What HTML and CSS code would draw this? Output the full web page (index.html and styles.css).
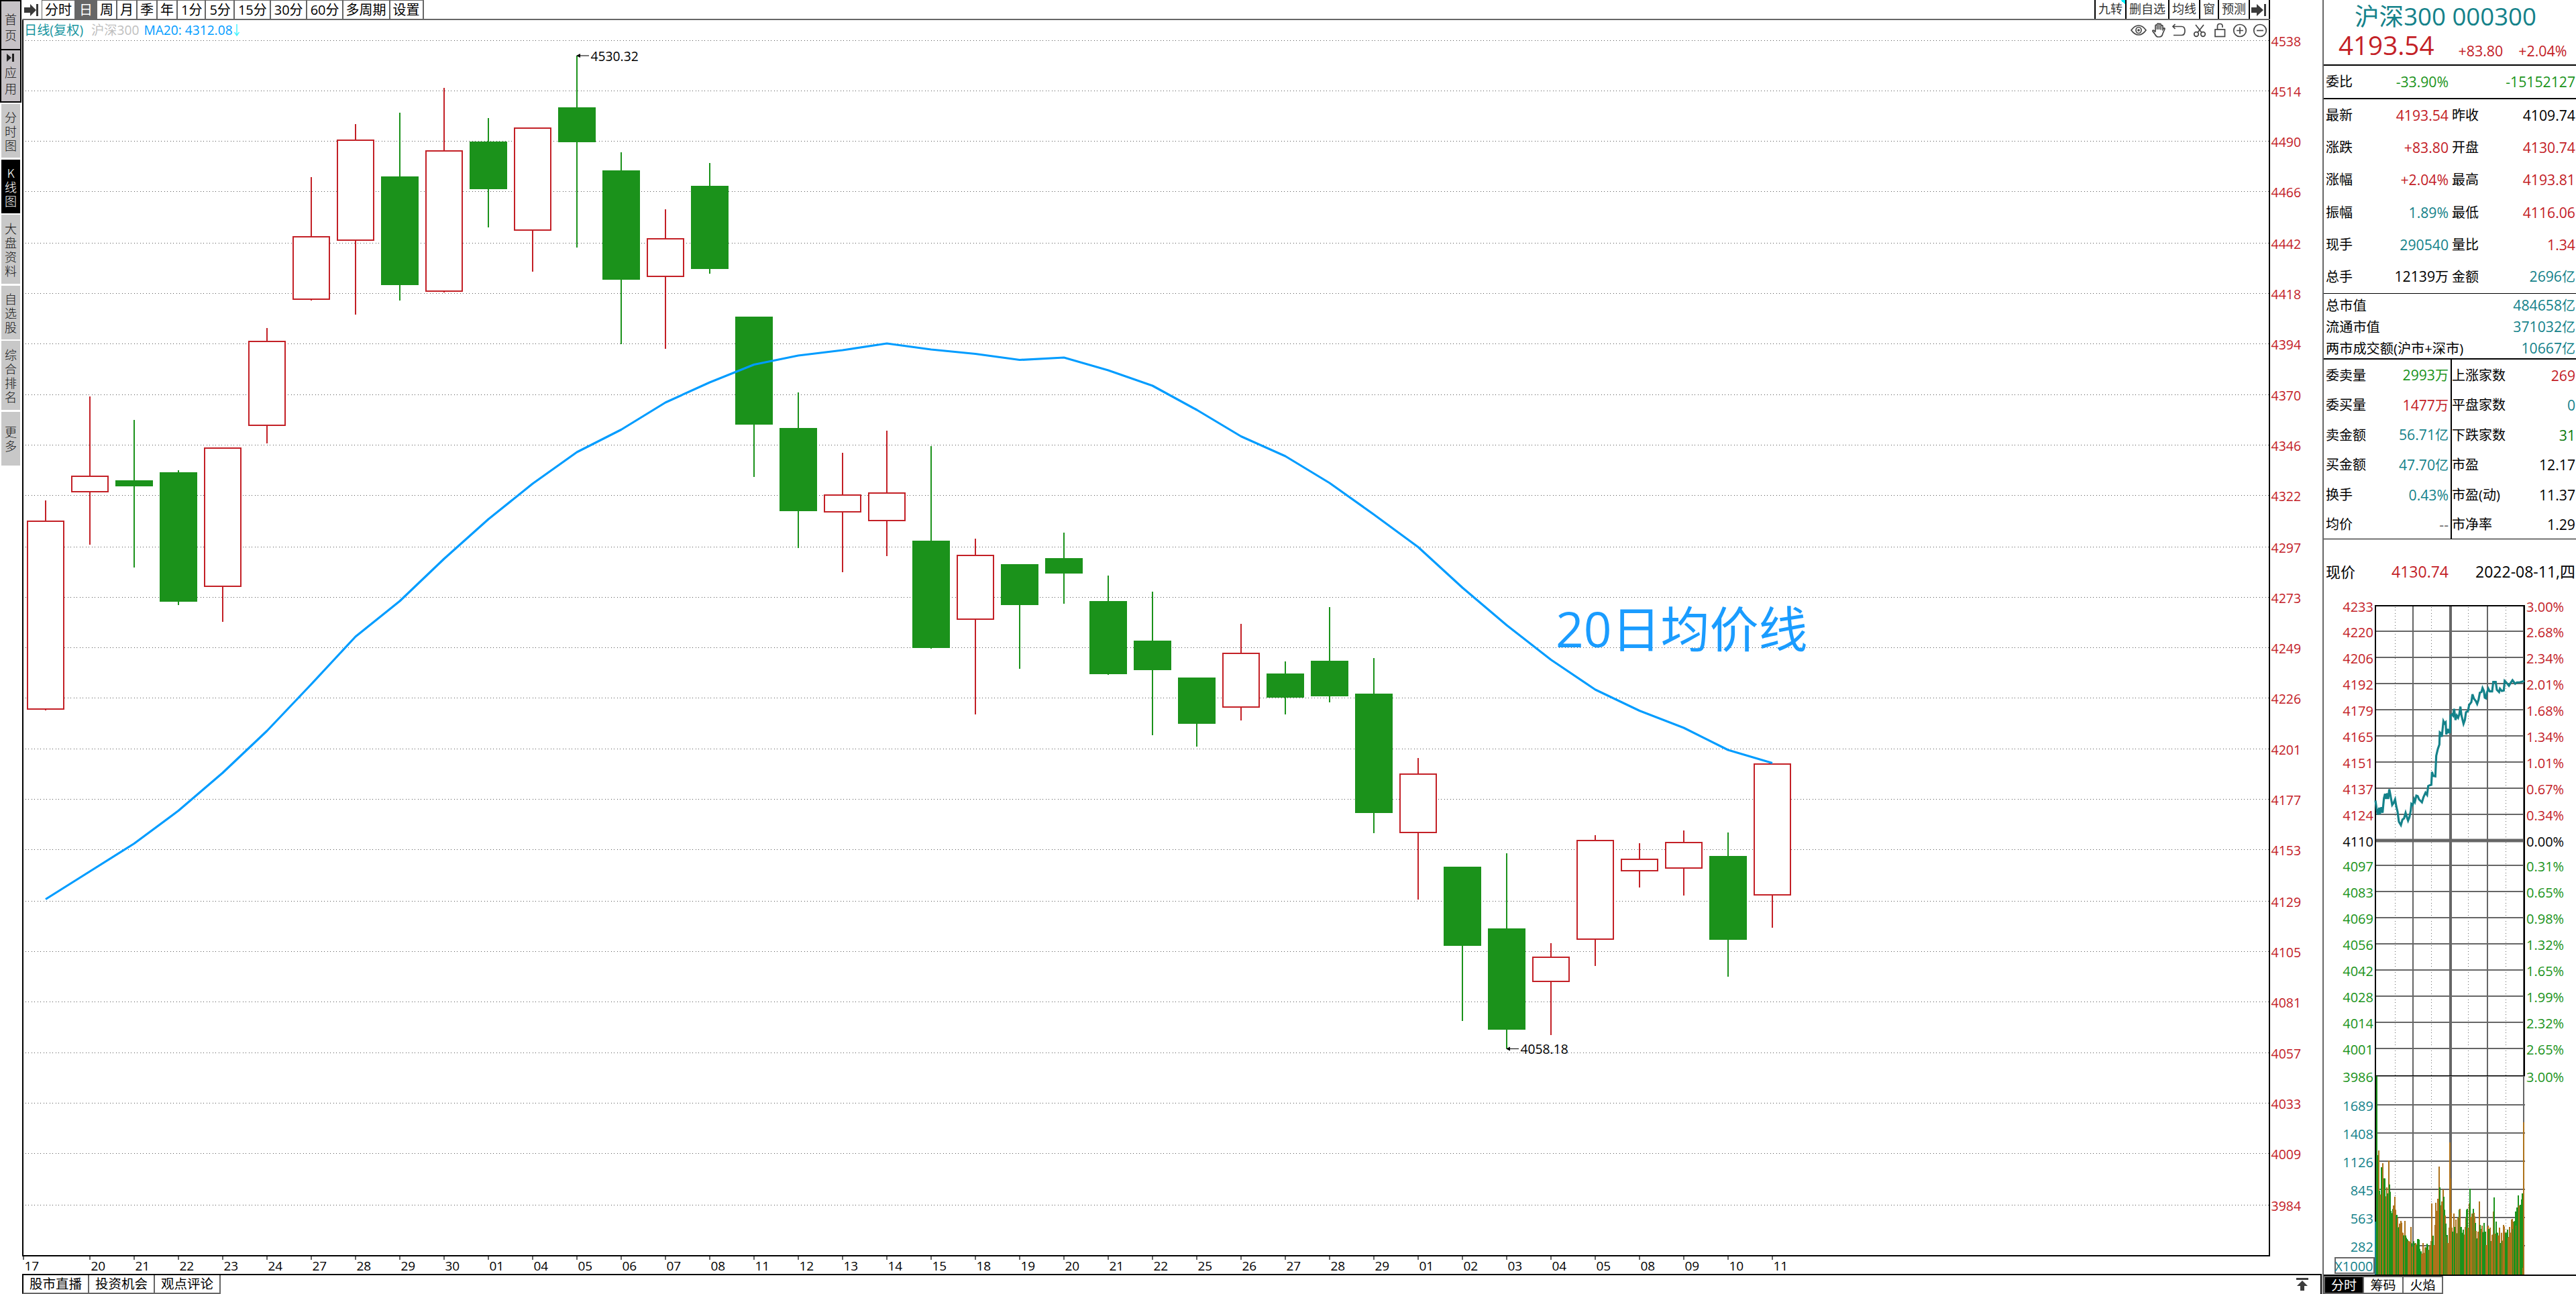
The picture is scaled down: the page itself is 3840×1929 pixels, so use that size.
FILE: index.html
```html
<!DOCTYPE html>
<html lang="zh-CN">
<head>
	<meta charset="utf-8">
	<title>沪深300 000300</title>
	<link rel="stylesheet" href="styles.css">
</head>
<body>
	<div id="layout">
		<div class="side">
			<a class="btn home">首页</a>
			<a class="btn app">
				<svg width="12" height="14" viewBox="0 0 12 14"><path d="M0 1L7 7L0 13Z"/><rect x="8" y="1" width="3" height="12"/></svg>
				应用
			</a>
			<a class="item">分时图</a>
			<a class="item on">K线图</a>
			<a class="item long">大盘资料</a>
			<a class="item own">自选股</a>
			<a class="item long">综合排名</a>
			<a class="item">更多</a>
		</div>

		<div class="main">
			<div class="toolbar">
				<svg class="arrow" width="28" height="28" viewBox="0 0 28 28"><path d="M3 11H12V6L21 15L12 24V19H3Z"/><rect x="21" y="6" width="3" height="18"/></svg>
				<div class="period">
					<a>分时</a><a class="on">日</a><a>周</a><a>月</a><a>季</a><a>年</a><a class="min">1分</a><a class="min">5分</a><a class="min">15分</a><a class="min">30分</a><a class="min">60分</a><a>多周期</a><a>设置</a>
				</div>
				<div class="extra">
					<a class="mark">九转</a><a>删自选</a><a>均线</a><a>窗</a><a>预测</a>
					<a class="go"><svg width="26" height="28" viewBox="0 0 26 28"><path d="M1 11H9V6L19 15L9 24V19H1Z"/><rect x="20" y="6" width="3" height="18"/></svg></a>
				</div>
			</div>

			<div class="plot">
				<svg id="kline" width="3428" height="1868" viewBox="33 30 3428 1868"></svg>
				<div class="legend">
					<span class="l1">日线(复权)</span>
					<span class="l2">沪深300</span>
					<span class="l3">MA20: 4312.08</span>
					<svg width="8" height="18" viewBox="0 0 8 18"><path d="M4 0V17M0.5 12L4 17L7.5 12"/></svg>
				</div>
				<div class="tools">
					<svg viewBox="0 0 24 24"><path d="M1 12Q6 5 12 5T23 12Q18 19 12 19T1 12Z"/><ellipse cx="12" cy="12" rx="4" ry="4.5"/><circle cx="12" cy="12" r="1"/></svg>
					<svg viewBox="0 0 24 24"><path d="M7 14V5.5Q7 4 8.3 4T9.6 5.5V11V3.5Q9.6 2 11 2T12.4 3.5V11V3.5Q12.4 2.3 13.8 2.3T15.2 3.8V11.5V6Q15.2 4.6 16.6 4.6T18 6V11L19.5 9Q21 8.5 21 10L18 17Q17 22 13 22H11Q8.500 22 7 19L3 13.500Q2.500 12 4 12Q5 12 7 15"/></svg>
					<svg viewBox="0 0 24 24"><path d="M3 6.500H16Q21 6.500 21 13T16 19.500H4M6.500 3L3 6.500L6.500 10"/></svg>
					<svg viewBox="0 0 24 24"><path d="M6 4L15 15.500M18 4L9 15.500"/><circle cx="7" cy="18" r="3.300"/><circle cx="17" cy="18" r="3.300"/></svg>
					<svg viewBox="0 0 24 24"><rect x="5" y="11" width="14.500" height="10.500"/><path d="M8.500 11V6Q8.500 2.500 12.300 2.500T16 6V8"/></svg>
					<svg viewBox="0 0 24 24"><ellipse cx="12" cy="12.500" rx="9.300" ry="9"/><path d="M7 12.500H17M12 7.500V17.500"/></svg>
					<svg viewBox="0 0 24 24"><ellipse cx="12" cy="12.500" rx="9.300" ry="9"/><path d="M7 12.500H17"/></svg>
				</div>
			</div>

			<div class="foot">
				<div class="tabs"><a>股市直播</a><a>投资机会</a><a>观点评论</a></div>
				<svg class="up" width="18" height="19" viewBox="0 0 18 19"><path d="M0 0H18V3H0ZM9 4L17 12H12V19H6V12H1Z"/></svg>
			</div>
		</div>

		<div class="quote">
			<div class="head">
				<div class="name">沪深300 000300</div>
				<div class="price red"><b>4193.54</b><span>+83.80</span><span>+2.04%</span></div>
			</div>
			<div class="sec wb">
				<div class="row"><p>委比<i class="green">-33.90%</i></p><p><i class="green">-15152127</i></p></div>
			</div>
			<div class="sec base">
				<div class="row"><p>最新<i class="red">4193.54</i></p><p>昨收<i>4109.74</i></p></div>
				<div class="row"><p>涨跌<i class="red">+83.80</i></p><p>开盘<i class="red">4130.74</i></p></div>
				<div class="row"><p>涨幅<i class="red">+2.04%</i></p><p>最高<i class="red">4193.81</i></p></div>
				<div class="row"><p>振幅<i class="teal">1.89%</i></p><p>最低<i class="red">4116.06</i></p></div>
				<div class="row"><p>现手<i class="teal">290540</i></p><p>量比<i class="red">1.34</i></p></div>
				<div class="row"><p>总手<i>12139<em>万</em></i></p><p>金额<i class="teal">2696<em>亿</em></i></p></div>
			</div>
			<div class="sec total">
				<p>总市值<i class="teal">484658<em>亿</em></i></p>
				<p>流通市值<i class="teal">371032<em>亿</em></i></p>
				<p>两市成交额(沪市+深市)<i class="teal">10667<em>亿</em></i></p>
			</div>
			<div class="sec split">
				<div class="row"><p>委卖量<i class="green">2993<em>万</em></i></p><p>上涨家数<i class="red">269</i></p></div>
				<div class="row"><p>委买量<i class="red">1477<em>万</em></i></p><p>平盘家数<i class="teal">0</i></p></div>
				<div class="row"><p>卖金额<i class="teal">56.71<em>亿</em></i></p><p>下跌家数<i class="dgreen">31</i></p></div>
				<div class="row"><p>买金额<i class="teal">47.70<em>亿</em></i></p><p>市盈<i>12.17</i></p></div>
				<div class="row"><p>换手<i class="teal">0.43%</i></p><p>市盈(动)<i>11.37</i></p></div>
				<div class="row"><p>均价<i class="gray">--</i></p><p>市净率<i>1.29</i></p></div>
			</div>
			<div class="now row"><p>现价<i class="red">4130.74</i></p><p><i>2022-08-11,四</i></p></div>
			<svg id="mini" width="376" height="1020" viewBox="3464 880 376 1020"></svg>
			<div class="qtabs"><a class="on">分时</a><a>筹码</a><a>火焰</a></div>
		</div>
	</div>

	<script src="script.js"></script>
</body>
</html>
```
FILE: styles.css
```css
*{
	margin: 0;
	padding: 0;
	box-sizing: border-box;
}
body{
	background: #fff;
	color: #000;
	font-family: "Open Sans","Noto Sans CJK SC",sans-serif;
	font-size: 20px;
	overflow: hidden;
}
i,em{
	font-style: normal;
}
svg{
	display: block;
	flex: none;
}
#layout{
	display: flex;
	width: 3840px;
	height: 1929px;
}
.red{ color: #c32026; }
.green{ color: #1a931a; }
.dgreen{ color: #0a780a; }
.teal{ color: #14828a; }
.gray{ color: #666; }

/* left menu */
.side{
	width: 33px;
	flex: none;
	font-family: "Noto Sans CJK SC",sans-serif;
	font-weight: 300;
	font-size: 18px;
	line-height: 21px;
	text-align: center;
	word-break: break-all;
}
.side a{
	display: flex;
	flex-direction: column;
	justify-content: center;
	align-items: center;
	padding: 0 5px;
	color: #111;
}
.side .btn{
	width: 32px;
	border: 2px solid #000;
	background: #c6c2c6;
	line-height: 24px;
	padding: 0 4px;
}
.side .home{
	height: 75px;
	padding-top: 5px;
}
.side .app{
	height: 78px;
	border-top: 0;
	margin-bottom: 2px;
	padding-bottom: 4px;
}
.side .app svg{
	fill: #222;
	margin-bottom: 2px;
}
.side .item{
	width: 28px;
	height: 80px;
	margin: 0 0 3px 2px;
	background: #c8c8c8;
}
.side .long{
	height: 103px;
}
.side .on{
	background: #000;
	color: #fff;
	margin-bottom: 2px;
}
.side .own{
	margin-bottom: 2px;
}

/* top bar */
.main{
	width: 3428px;
	flex: none;
	display: flex;
	flex-direction: column;
}
.toolbar{
	width: 3351px;
	height: 30px;
	border-bottom: 2px solid #666;
	display: flex;
}
.toolbar svg{
	fill: #3a3a3a;
}
.period{
	display: flex;
	border-top: 1px solid #666;
	border-left: 1px solid #666;
	margin-left: 1px;
}
.period a{
	padding: 0 4px;
	line-height: 27px;
	border-right: 2px solid #666;
}
.period .on{
	background: #666;
	color: #fff;
	padding: 0 5px;
}
.period .min{
	padding: 0 4px 0 5px;
}
.extra{
	display: flex;
	margin-left: auto;
	font-size: 18px;
	line-height: 27px;
	color: #333;
	border-right: 2px solid #000;
}
.extra a{
	border-left: 2px solid #000;
	padding: 0 4px;
}
.extra .go{
	padding: 0 1px;
}
.mark{
	background: linear-gradient(to top right,transparent 50%,#00f0ff 50%) right top/7px 7px no-repeat;
}

/* k line */
.plot{
	position: relative;
	height: 1868px;
}
.legend{
	position: absolute;
	left: 3px;
	top: 0;
	height: 30px;
	display: flex;
	align-items: center;
	font-size: 19.200px;
	line-height: 30px;
}
.legend .l1{ color: #1795a0; margin-right: 12px; }
.legend .l2{ color: #bfbfbf; margin-right: 7px; }
.legend .l3{ color: #009cff; margin-right: 2px; }
.legend svg{
	fill: none;
	stroke: #40f4ff;
	stroke-width: 1.4;
}
.tools{
	position: absolute;
	top: 3px;
	left: 3143px;
	display: flex;
	gap: 6.200px;
}
.tools svg{
	width: 24px;
	height: 24px;
	fill: none;
	stroke: #444;
	stroke-width: 1.7;
}
.grid{ stroke: #555; stroke-width: 1; stroke-dasharray: 1 3 1 4; }
.up-c{ fill: #fff; stroke: #c32026; stroke-width: 2; }
.down-c{ fill: #1b921b; stroke: none; }
.w-up{ stroke: #c32026; stroke-width: 2; }
.w-down{ stroke: #1b921b; stroke-width: 2; }
.axis{ stroke: #000; stroke-width: 2; }
.tick{ stroke: #666; stroke-width: 2; }
.ma{ fill: none; stroke: #009cff; stroke-width: 3.2; stroke-linejoin: round; }
.t-y{ font-size: 19.500px; fill: #c32026; }
.t-x{ font-size: 19px; fill: #000; }
.t-p{ font-size: 19.300px; fill: #000; }
.t-ma{ font-size: 73px; fill: #1a9cff; }

/* bottom bar */
.foot{
	height: 31px;
	display: flex;
	justify-content: space-between;
	border-top: 2px solid #000;
	border-right: 2px solid #000;
	margin-top: 1px;
}
.tabs{
	display: flex;
	height: 28px;
	border-left: 2px solid #000;
	border-bottom: 2px solid #666;
}
.tabs a{
	width: 98px;
	font-size: 19.500px;
	line-height: 26px;
	text-align: center;
	border-right: 2px solid #666;
}
.foot .up{
	margin: 4px 18px 0 0;
	fill: #3c3c3c;
}

/* quote panel */
.quote{
	width: 378px;
	flex: none;
	margin-left: 1px;
	border-left: 2px solid #666;
}
.head{
	height: 98px;
	border-bottom: 2px solid #000;
}
.name{
	height: 48px;
	line-height: 48px;
	padding-left: 46px;
	font-size: 36.600px;
	color: #14828a;
	white-space: nowrap;
}
.price{
	display: flex;
	height: 48px;
	padding-left: 22px;
	font-size: 21.400px;
	line-height: 56px;
}
.price b{
	width: 183px;
	font-weight: 400;
	font-size: 38.600px;
	line-height: 39px;
}
.price span{
	width: 90px;
	white-space: nowrap;
}
.price span + span{
	padding-left: 2px;
}
.sec{
	display: flex;
	flex-direction: column;
	border-bottom: 2px solid #000;
}
.sec .row{
	flex: 1;
}
.row{
	display: grid;
	grid-template-columns: 183px 184px;
	column-gap: 5px;
	align-items: center;
	padding: 0 1px 0 3px;
}
.quote p{
	display: flex;
	align-items: center;
	white-space: nowrap;
	line-height: 30px;
}
.quote i{
	margin-left: auto;
	font-size: 21.200px;
}
.quote em{
	font-size: 20px;
}
.wb{ height: 50px; }
.base{
	height: 290px;
	border-bottom-width: 1px;
}
.total{ height: 98px; }
.total p{
	height: 32px;
	padding: 2px 1px 0 3px;
	font-size: 20.200px;
	line-height: 28px;
}
.split{
	height: 268px;
	border-bottom-width: 1px;
}
.split .row{
	grid-template-columns: 183px 186px;
	column-gap: 3px;
	align-items: stretch;
}
.split p{
	padding-top: 3px;
}
.split p + p{
	border-left: 2px solid #000;
}
.now{
	height: 76px;
	padding-top: 20px;
	font-size: 22px;
}
.now i{
	font-size: 23px;
}
.m-grid{ stroke: #666; stroke-width: 2; }
.m-dot{ stroke: #666; stroke-width: 1; stroke-dasharray: 1 3 1 4; }
.m-line{ fill: none; stroke: #14828a; stroke-width: 3; }
.m-t{ font-size: 20px; }
.m-box{ fill: #fff; stroke: #666; stroke-width: 2; }
.qtabs{
	display: flex;
	height: 29px;
	border-top: 2px solid #000;
	line-height: 25px;
	font-size: 19px;
	text-align: center;
}
.qtabs a{
	width: 59px;
	height: 27px;
	border: 2px solid #666;
	border-left: 0;
}
.qtabs .on{
	width: 60px;
	background: #000;
	color: #fff;
	border-left: 2px solid #666;
}
```
FILE: script.js
```js
var $ = function(id){
	return document.getElementById(id);
};
function line(x1,y1,x2,y2,cls,extra){
	return '<line x1="'+x1+'" y1="'+y1+'" x2="'+x2+'" y2="'+y2+'" class="'+cls+'" '+(extra||'')+'/>';
}
function rect(x,y,w,h,extra){
	return '<rect x="'+x+'" y="'+y+'" width="'+w+'" height="'+h+'" '+extra+'/>';
}
function text(x,y,s,cls,extra){
	return '<text x="'+x+'" y="'+y+'" class="'+cls+'" '+(extra||'')+'>'+s+'</text>';
}

// 日K: 1阳 0阴, 最高, 实体上, 实体下, 最低
var candles = [
	[1,746,777,1057,1059],[1,591,710,733,812],[0,626,716,725,846],[0,701,704,897,902],[1,668,668,874,927],
	[1,489,509,634,661],[1,264,353,446,448],[1,185,209,358,469],[0,168,263,425,448],[1,131,225,434,436],
	[0,176,211,282,339],[1,191,191,343,405],[0,83,160,212,369],[0,227,254,417,513],[1,312,356,412,520],
	[0,243,277,401,408],[0,472,472,633,711],[0,585,638,762,817],[1,675,738,763,853],[1,642,735,776,829],
	[0,665,806,966,967],[1,803,828,923,1065],[0,841,841,902,997],[0,794,832,855,900],[0,858,896,1005,1006],
	[0,882,955,999,1096],[0,1010,1010,1079,1113],[1,930,974,1054,1074],[0,986,1004,1040,1065],[0,905,985,1038,1047],
	[0,981,1034,1212,1242],[1,1130,1154,1241,1341],[0,1292,1292,1410,1522],[0,1272,1384,1535,1563],[1,1406,1427,1463,1543],
	[1,1245,1253,1400,1440],[1,1257,1281,1298,1323],[1,1238,1256,1294,1335],[0,1241,1276,1401,1456],[1,1139,1139,1334,1383]
];
var ma = [1340.5,1299,1257.5,1208.5,1152,1089.5,1020,949,896,833,774,721,674,640.5,600,570,543.5,530,522,512,
	521,527.5,536.5,533,552,575,611,650.5,680,720,767,815.5,876,932,983.5,1028,1059.5,1085,1118,1137.5];
var days = '17 20 21 22 23 24 27 28 29 30 01 04 05 06 07 08 11 12 13 14 15 18 19 20 21 22 25 26 27 28 29 01 02 03 04 05 08 09 10 11'.split(' ');
var prices = [4538,4514,4490,4466,4442,4418,4394,4370,4346,4322,4297,4273,4249,4226,4201,4177,4153,4129,4105,4081,4057,4033,4009,3984];
var priceY = [60,135,210,285,362,437,512,588,663,738,815,890,965,1040,1116,1191,1266,1343,1418,1493,1569,1644,1719,1796];

function drawKline(){
	var s = '', i;
	for(i=0;i<prices.length;i++){
		s += line(38,priceY[i]+.5,3382,priceY[i]+.5,'grid');
		s += text(3385.5,priceY[i]+8.5,prices[i],'t-y');
	}
	var pts = [];
	for(i=0;i<candles.length;i++){
		var c = candles[i], x = 68+66*i;
		var w = c[0] ? 'w-up' : 'w-down';
		s += line(x,c[1],x,c[2],w)+line(x,c[3],x,c[4],w);
		if(c[0]){
			s += rect(x-27,c[2],54,c[3]-c[2],'class="up-c"');
		}else{
			s += rect(x-28,c[2],56,c[3]-c[2],'class="down-c"');
		}
		var tx = i ? x : 35;
		s += line(tx,1873,tx,1878,'tick')+text(tx+1.5,1893.5,days[i],'t-x');
		pts.push(x+','+ma[i]);
	}
	s += '<polyline points="'+pts.join(' ')+'" class="ma"/>';
	s += line(34,30,34,1873,'axis')+line(3383,30,3383,1873,'axis')+line(33,1872,3384,1872,'axis');
	// 最高最低标注
	s += line(864,83,878,83,'',' stroke="#777" stroke-width="2"')+'<path d="M859 83L865 80V86Z"/>'+text(880.5,91,'4530.32','t-p');
	s += line(2248,1563.5,2264,1563.5,'',' stroke="#000"')+'<path d="M2245 1563.5L2251 1560.5V1566.5Z"/>'+text(2266.5,1571,'4058.18','t-p');
	s += text(2319,965,'20日均价线','t-ma');
	$('kline').innerHTML = s;
}

// 分时价格, 三分之一像素
var trend = '303,940 308,975 313,1003 320,972 323,1000 330,970 335,995 341,930 346,910 350,933 356,908 360,933 365,890 370,915 378,960 385,950 391,935 396,965 402,990 408,1035 417,1050 424,1025 431,1020 438,995 443,1012 449,1030 455,1015 461,985 464,955 470,960 476,935 480,945 486,918 492,920 498,935 505,942 511,948 518,925 527,905 534,915 539,875 545,872 553,870 556,812 562,830 571,832 575,740 582,710 589,690 591,635 597,640 600,655 607,585 612,595 617,590 620,645 626,620 630,635 636,635 639,560 646,555 650,560 655,530 661,580 667,560 673,570 678,555 683,520 688,560 697,597 703,580 708,545 717,540 722,513 732,500 737,465 744,485 752,495 758,508 764,490 770,458 777,455 782,437 788,450 792,480 797,483 801,460 808,440 814,452 825,452 830,410 841,410 846,445 856,455 860,440 868,450 877,448 881,405 888,412 900,427 907,415 916,402 928,418 936,412 950,411 969,406';
// 分时成交量, o涨 g跌
var vols = 'g42 g396 g575 o375 g555 o572 o590 g450 g450 o432 o500 g500 g500 g583 o580 o540 g567 g567 o420 g527 g560 g645 g655 g663 g637 o621 o621 o582 o640 g665 g663 o676 g720 g718 o702 o702 o690 o698 o743 o743 g755 g755 o690 g755 g765 g771 g775 o780 o780 o784 o784 o717 g790 o805 o808 g781 g790 o798 o789 o795 g800 g771 g771 g774 g815 g828 g826 o838 o836 o789 o835 o833 o808 o808 g810 g792 g798 o820 g820 o800 o800 o780 o612 g780 g756 o800 o798 o708 o609 o645 o645 o591 o591 o447 g540 g620 o621 o603 o603 o549 g582 g640 o666 g702 o760 g753 o789 o790 o720 o339 o500 o654 o720 g738 g738 o657 g717 g743 o684 o747 g745 o675 o690 g640 o636 g717 g717 g745 g743 g729 g752 o752 o717 o675 g640 g636 o720 o720 o612 g546 o672 o672 o657 o657 g636 o654 o670 g699 o735 g770 g768 o738 o738 o603 g708 g726 o728 o711 g740 g752 g699 g738 g738 o798 o800 o717 o711 g726 g730 o720 g780 o780 o752 o752 o648 g585 o747 o747 g693 g743 g743 o755 o757 o720 g789 g789 o743 g780 o778 o708 o715 o743 g743 g743 g743 g729 o765 o762 o717 o743 o743 o684 o681 g726 o693 g693 g690 g648 o711 g630 g630 g576 o621 o621 g618 g618 g594 g567 o900 o249'.split(' ');
var left = [4233,4220,4206,4192,4179,4165,4151,4137,4124,4110,4097,4083,4069,4056,4042,4028,4014,4001,3986];
var right = ['3.00','2.68','2.34','2.01','1.68','1.34','1.01','0.67','0.34','0.00','0.31','0.65','0.98','1.32','1.65','1.99','2.32','2.65','3.00'];
var rowY = [903,941,980,1019,1058,1097,1136,1175,1214,1253,1290,1329,1368,1407,1446,1485,1524,1563,1604];
var volT = [1689,1408,1126,845,563,282];

function drawMini(){
	var s = '', i;
	[3570.5,3624.5,3679.5,3735.5].forEach(function(x){
		s += line(x,905,x,1900,'m-dot');
	});
	[3597,3708,3762].forEach(function(x){
		s += line(x,904,x,1900,'m-grid');
	});
	s += line(3653,904,3653,1900,'m-grid','style="stroke-width:4px"');
	for(i=0;i<left.length;i++){
		var y = rowY[i];
		if(i>0) s += line(3541,y,3764,y,'m-grid',i==9?'style="stroke-width:5px"':'');
		var col = i<9 ? '#c32026' : i==9 ? '#000' : '#1a931a';
		s += text(3538,y+8.500,left[i],'m-t','text-anchor="end" fill="'+col+'"');
		s += text(3766,y+8.500,right[i]+'%','m-t','fill="'+col+'"');
	}
	for(i=0;i<volT.length;i++){
		var vy = 1647+42*i;
		s += line(3541,vy,3764,vy,'m-grid');
		s += text(3538,vy+8.500,volT[i],'m-t','text-anchor="end" fill="#14828a"');
	}
	for(i=0;i<vols.length;i++){
		var h = (930-vols[i].slice(1))/3;
		s += rect(3542+i,1900-h,2,h,'fill="'+(vols[i][0]=='g'?'#1b921b':'#ad721b')+'"');
	}
	s += line(3540,903,3764,903,'axis')+line(3541,903,3541,1821,'axis')+line(3763,903,3763,1604,'axis');
	s += line(3541,1603.5,3764,1603.5,'axis','style="stroke-width:1px"');
	s += line(3541,1821,3541,1900,'m-line','style="stroke-width:2px"');
	s += '<g transform="translate(3440 880) scale(.33333)"><polyline points="'+trend+'" class="m-line" style="stroke-width:9.500px"/></g>';
	s += rect(3481,1875,58,23,'class="m-box"')+text(3537.5,1895,'X1000','m-t','text-anchor="end" fill="#14828a"');
	$('mini').innerHTML = s;
}

drawKline();
drawMini();
```
